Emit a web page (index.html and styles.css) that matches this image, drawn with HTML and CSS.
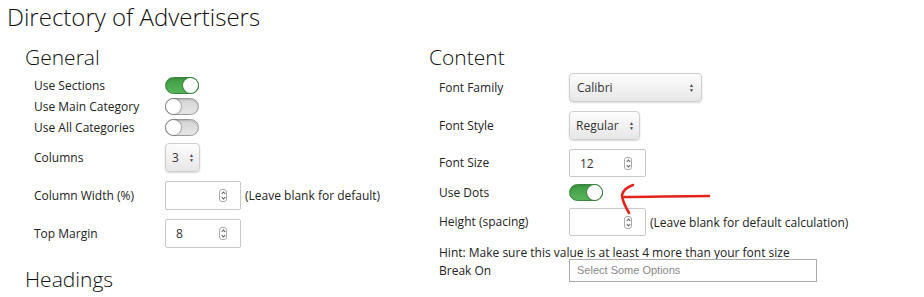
FILE: index.html
```html
<!DOCTYPE html>
<html lang="en">
<head>
    <meta charset="UTF-8">
    <title>Directory of Advertisers</title>
    <link rel="stylesheet" href="styles.css">
</head>
<body>
    <h1>Directory of Advertisers</h1>
    <div class="columns">
        <div class="section">
            <h2>General</h2>
            <div class="row toggle-row">
                <label>Use Sections</label>
                <span class="toggle on"><span class="knob"></span></span>
            </div>
            <div class="row toggle-row">
                <label>Use Main Category</label>
                <span class="toggle"><span class="knob"></span></span>
            </div>
            <div class="row toggle-row">
                <label>Use All Categories</label>
                <span class="toggle"><span class="knob"></span></span>
            </div>
            <div class="row first-field">
                <label>Columns</label>
                <div class="select small">3<span class="arrows">&#9650;<br>&#9660;</span></div>
            </div>
            <div class="row field">
                <label>Column Width (%)</label>
                <div class="num"><span class="val"></span><span class="spin"></span></div>
                <span class="note">(Leave blank for default)</span>
            </div>
            <div class="row field">
                <label>Top Margin</label>
                <div class="num"><span class="val">8</span><span class="spin"></span></div>
            </div>
            <h2 class="next">Headings</h2>
        </div>

        <div class="section right">
            <h2>Content</h2>
            <div class="row field top">
                <label>Font Family</label>
                <div class="select wide">Calibri<span class="arrows">&#9650;<br>&#9660;</span></div>
            </div>
            <div class="row field">
                <label>Font Style</label>
                <div class="select mid">Regular<span class="arrows">&#9650;<br>&#9660;</span></div>
            </div>
            <div class="row field">
                <label>Font Size</label>
                <div class="num short"><span class="val">12</span><span class="spin"></span></div>
            </div>
            <div class="row toggle-row dots">
                <label>Use Dots</label>
                <span class="toggle on"><span class="knob"></span></span>
                <svg class="arrow" width="100" height="34" viewBox="0 0 100 34">
                    <path d="M14 3 C8 5 4 9 3 13 C3 18 6 24 10 31" fill="none" stroke="#e3231b" stroke-width="2.6" stroke-linecap="round"/>
                    <path d="M5 15 C30 15 60 14 90 14" fill="none" stroke="#e3231b" stroke-width="2.6" stroke-linecap="round"/>
                </svg>
            </div>
            <div class="row field height">
                <label>Height (spacing)</label>
                <div class="num short"><span class="val"></span><span class="spin"></span></div>
                <span class="note">(Leave blank for default calculation)</span>
            </div>
            <p class="hint">Hint: Make sure this value is at least 4 more than your font size</p>
            <div class="row">
                <label>Break On</label>
                <div class="multi">Select Some Options</div>
            </div>
        </div>
    </div>
</body>
</html>
```

FILE: styles.css
```css
body {
    font-family: "Open Sans", "Liberation Sans", sans-serif;
    margin: 0;
    padding: 0 0 0 7px;
    color: #222;
    background-color: #fff;
    font-size: 12px;
}
h1 {
    font-size: 24px;
    font-weight: 300;
    line-height: 34px;
    margin: 0;
    color: #111;
}
h2 {
    font-size: 21px;
    font-weight: 300;
    line-height: 30px;
    margin: 8px 0 0 0;
    color: #111;
}
h2.next {
    margin-top: 16px;
}
.columns {
    display: flex;
    padding-left: 18px;
}
.section {
    width: 404px;
}
.section.right {
    width: 480px;
}
.row {
    display: flex;
    align-items: center;
    padding-left: 9px;
}
.right .row, .right .hint {
    padding-left: 10px;
}
.row label {
    width: 131px;
    flex-shrink: 0;
    line-height: 18px;
}
.right .row label {
    width: 130px;
}
.toggle-row {
    height: 21px;
}
.toggle-row:first-of-type {
    margin-top: 3px;
}
.first-field {
    margin-top: 5px;
}
.field {
    margin-top: 9px;
}
.field.top {
    margin-top: 1px;
}
.dots {
    margin-top: 5px;
    position: relative;
}
.height {
    margin-top: 5px;
}
.toggle {
    position: relative;
    width: 32px;
    height: 15px;
    border: 1px solid #9a9a9a;
    border-radius: 9px;
    background: linear-gradient(#d4d4d4, #e6e6e6);
    box-shadow: inset 0 1px 2px rgba(0, 0, 0, 0.15);
}
.toggle .knob {
    position: absolute;
    left: 0;
    top: 0;
    width: 15px;
    height: 15px;
    border-radius: 50%;
    background: #fff;
    box-shadow: 0 0 1px 1px rgba(0, 0, 0, 0.25);
}
.toggle.on {
    background: linear-gradient(#3f9b44, #57b55b);
    border-color: #3a843d;
}
.toggle.on .knob {
    left: 17px;
    box-shadow: 0 0 0 1px #3a843d;
}
.select {
    display: flex;
    align-items: center;
    justify-content: space-between;
    box-sizing: border-box;
    height: 29px;
    padding: 0 7px;
    border: 1px solid #cfcfcf;
    border-radius: 4px;
    background: linear-gradient(#fdfdfd, #e6e6e6);
    box-shadow: 0 1px 2px rgba(0, 0, 0, 0.15);
    font-size: 12px;
    color: #333;
}
.select.small {
    width: 35px;
    padding: 0 5px 0 6px;
}
.select.wide {
    width: 133px;
}
.select.mid {
    width: 71px;
    padding: 0 5px 0 6px;
}
.arrows {
    font-size: 5px;
    line-height: 5px;
    color: #444;
    text-align: center;
}
.num {
    display: flex;
    align-items: center;
    justify-content: space-between;
    box-sizing: border-box;
    width: 76px;
    height: 29px;
    padding: 0 13px 0 10px;
    border: 1px solid #c8c8c8;
    border-radius: 2px;
    background: #fff;
    color: #333;
}
.num.short {
    width: 77px;
    height: 28px;
}
.spin {
    position: relative;
    width: 6px;
    height: 11px;
    border: 1px solid #aaa;
    border-radius: 3px;
}
.spin::before, .spin::after {
    content: "";
    position: absolute;
    left: 1.5px;
    width: 2px;
    height: 2px;
    border-left: 1px solid #555;
    border-top: 1px solid #555;
}
.spin::before {
    top: 2px;
    transform: rotate(45deg);
}
.spin::after {
    bottom: 2px;
    transform: rotate(225deg);
}
.note {
    margin-left: 4px;
    color: #222;
}
.hint {
    margin: 8px 0 -3px 0;
    line-height: 18px;
}
.multi {
    box-sizing: border-box;
    width: 248px;
    height: 23px;
    padding: 0 7px;
    border: 1px solid #aaa;
    font-family: "Liberation Sans", Arial, sans-serif;
    font-size: 11px;
    line-height: 21px;
    color: #888;
}
.arrow {
    position: absolute;
    left: 190px;
    top: 0;
}
```
